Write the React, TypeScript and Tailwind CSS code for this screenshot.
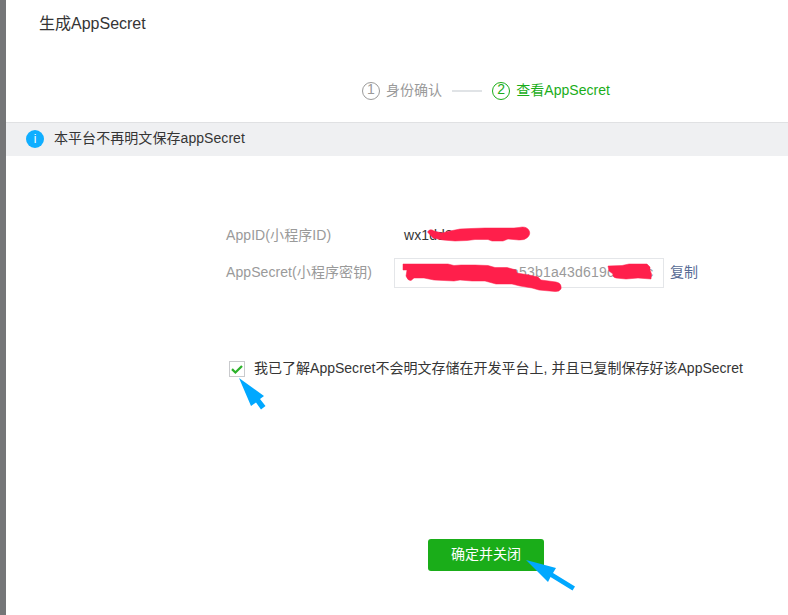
import React from "react";

function Step({ n, label, active }: { n: number; label: string; active?: boolean }) {
  return (
    <div className={`flex items-center ${active ? "text-[#1aad19]" : "text-[#9a9a9a]"}`}>
      <span
        className={`mt-[2px] flex h-[18px] w-[18px] items-center justify-center rounded-full border ${
          active ? "border-[#1aad19]" : "border-[#9a9a9a]"
        }`}
      >
        <span className="-mt-1 leading-4">{n}</span>
      </span>
      <span className="ml-[6px] leading-5 tracking-[0.04px]">{label}</span>
    </div>
  );
}

export default function App() {
  return (
    <div className="flex h-[615px] w-[788px] overflow-hidden bg-[#757678] font-['Liberation_Sans','Noto_Sans_CJK_SC',sans-serif] text-sm text-[#353535]">
      <main className="relative ml-[6px] flex flex-1 flex-col bg-white">
        <h3 className="h-20 pl-[33px] pt-3 text-base leading-6">生成AppSecret</h3>
        <div className="flex h-[42px] items-start pl-[356px]">
          <Step n={1} label="身份确认" />
          <span className="ml-[10px] mr-[10px] mt-[10px] h-[2px] w-[30px] bg-[#e0e3e6]" />
          <Step n={2} label="查看AppSecret" active />
        </div>
        <div className="flex h-[34px] items-center border-t border-[#e0e1e3] bg-[#eff0f2] pb-[2px] pl-5">
          <span className="flex h-[18px] w-[18px] items-center justify-center rounded-full bg-[#10aeff] text-xs leading-4 text-white">
            i
          </span>
          <span className="-mt-[2px] ml-[10px] leading-5 tracking-[0.06px]">本平台不再明文保存appSecret</span>
        </div>

        <div className="mt-[69px] flex h-5 items-center pl-[220px] leading-5">
          <span className="w-[178px] tracking-[0.08px] text-[#9a9a9a]">AppID(小程序ID)</span>
          <span className="tracking-[0.1px]">wx1dd8</span>
        </div>
        <div className="mt-[13px] flex h-[30px] items-center pl-[220px]">
          <span className="w-[168px] pb-[2px] leading-5 tracking-[0.08px] text-[#9a9a9a]">AppSecret(小程序密钥)</span>
          <span className="flex h-[30px] w-[270px] items-center border border-[#e4e6e9] pb-[2px] pl-[116px] text-[#9a9a9a]">
            <span className="tracking-[0.21px]">a53b1a43d619c</span>
            <span className="ml-[32px]">c</span>
          </span>
          <a className="ml-[6px] pb-[2px] leading-5 text-[#576b95]">复制</a>
        </div>

        <label className="mt-[70px] flex h-5 items-center pl-[223px] leading-5">
          <span className="mt-[2px] flex h-4 w-4 items-center justify-center border border-[#c9cacd]">
            <svg width="14" height="14" viewBox="0 0 14 14" fill="none" className="shrink-0">
              <path d="M2 7.2 5.4 10.5 12 4" stroke="#2cb22b" strokeWidth="2.3" />
            </svg>
          </span>
          <span className="ml-[9px] whitespace-nowrap tracking-[0.01px]">
            我已了解AppSecret不会明文存储在开发平台上, 并且已复制保存好该AppSecret
          </span>
        </label>

        <button className="ml-[422px] mt-[161px] h-8 w-[116px] rounded-[3px] bg-[#1aad19] pb-[2px] text-white">
          确定并关闭
        </button>

        <svg
          className="pointer-events-none absolute -left-[6px] top-0"
          width="788"
          height="615"
          viewBox="0 0 788 615"
        >
          <g fill="#ff1f4b" stroke="#ff1f4b" strokeWidth="0.5" strokeLinejoin="round">
            <path d="M427.5 232Q430 228 434 231L442 233 450 231 460 229 471 228.5 485 228 514 228 519 227.5Q525 226 528 229 531.5 233 528 237 525 240.5 519 240L508 239 503 241 492 241 488 239.5 475 239.5 467 240.5 455 241 443 240 433 238Z" />
            <path d="M403 264 448 264 454 265.5 461 265 475 265 488 265.5 495 267.5 507 267.5 516 270 517 273 529 275 538 277 541 280 556 282Q562 283 561 289 559 292 555 291.5L539 290 532 288 520 286 512 284 496 284 485 281 472 281 460 280 454 281 434 280 424 278 414 278 411 280.5Q408 281 406 276L407 270 403 270Z" />
            <path d="M608 266 622 265.5 629 264 647 264 650 267 650 270 651.5 274 651 279 638 278 626 279 616 278Q612 277 613 274L609 271Z" />
          </g>
          <g fill="#00a8ff">
            <path d="M239 378 264 396 260 399 265.5 406 261 409.5 256 402.5 251 406Z" />
            <path d="M526 560 556 568 553 573 575 586.5 572.5 590.5 550.5 577 548 582Z" />
          </g>
        </svg>
      </main>
    </div>
  );
}
